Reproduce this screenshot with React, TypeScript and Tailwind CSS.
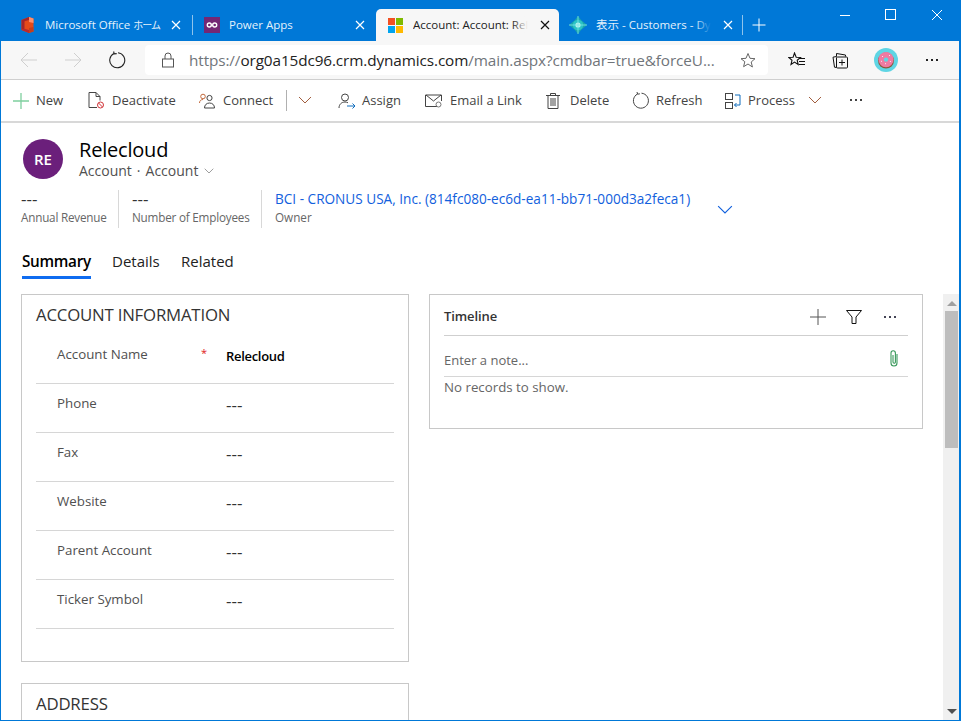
import React from "react";

const FONT = { fontFamily: '"Open Sans","Noto Sans","Noto Sans CJK JP",sans-serif' };

function X({ className = "" }: { className?: string }) {
  return (
    <svg width="10" height="10" viewBox="0 0 10 10" className={className} fill="none" stroke="currentColor" strokeWidth="1.2">
      <path d="M1 1l8 8M9 1l-8 8" />
    </svg>
  );
}

function OfficeIcon() {
  return (
    <svg width="13" height="16" viewBox="0 0 13 16">
      <path d="M.5 3L8 0l4.500 1.500v13L8 16 .5 13z" fill="#e64a19" />
      <path d="M.5 3L8 0v3L3.500 4.300v7.400L.5 13z" fill="#a4262c" />
      <path d="M.5 13l3-1.300L8 13v3z" fill="#b7282e" />
      <path d="M8 0l4.500 1.500v4.500L8 5z" fill="#ff8f6b" />
      <path d="M8 11l4.500-1v4.500L8 16z" fill="#c43e1c" />
    </svg>
  );
}

function PowerAppsIcon() {
  return (
    <svg width="16" height="16" viewBox="0 0 16 16">
      <rect width="16" height="16" fill="#742774" />
      <circle cx="5.300" cy="8" r="2" fill="none" stroke="#fff" strokeWidth="1.400" />
      <circle cx="10.700" cy="8" r="2" fill="none" stroke="#fff" strokeWidth="1.400" />
    </svg>
  );
}

function MsLogo() {
  return (
    <svg width="15" height="15" viewBox="0 0 15 15">
      <rect width="7" height="7" fill="#f25022" />
      <rect x="8" width="7" height="7" fill="#7fba00" />
      <rect y="8" width="7" height="7" fill="#00a4ef" />
      <rect x="8" y="8" width="7" height="7" fill="#ffb900" />
    </svg>
  );
}

function DynIcon() {
  return (
    <svg width="18" height="18" viewBox="0 0 18 18" className="shrink-0">
      <path d="M9 0l3 4 6 5-6 5-3 4-3-4-6-5 6-5z" fill="#1aa5ad" />
      <circle cx="9" cy="9" r="5.200" fill="#2bc3c6" />
      <circle cx="9" cy="9" r="2.600" fill="#b5f3f0" />
      <path d="M0 9h18M9 0v18" stroke="#7fe6e6" strokeWidth=".8" />
    </svg>
  );
}

function Tab({ icon, label, active, width, fade, pad = "pl-[11px] pr-[9px]", gap = "ml-[10px]" }: { icon: React.ReactNode; label: React.ReactNode; active?: boolean; width: string; fade?: boolean; pad?: string; gap?: string }) {
  return (
    <div className={`flex items-center h-8 shrink-0 ${pad} ${width} ${active ? "bg-[#f7f7f7] rounded-t-[5px] text-[#222]" : "text-[#e4f1fb]"}`}>
      <div className="w-[16px] h-[17px] flex items-center justify-center shrink-0">{icon}</div>
      <div className={`flex-1 min-w-0 ${gap} overflow-hidden whitespace-nowrap text-[11.500px] relative`}>
        {label}
        {fade && <span className={`absolute right-0 top-0 bottom-0 w-4 bg-gradient-to-r from-transparent ${active ? "to-[#f7f7f7]" : "to-[#0078d7]"}`} />}
      </div>
      <X className={`shrink-0 ${fade ? "ml-[12px]" : "ml-1"} ${active ? "text-[#111]" : "text-white"}`} />
    </div>
  );
}

function Cmd({ icon, label, width, gap = "ml-[6px]" }: { icon: React.ReactNode; label?: string; width: string; gap?: string }) {
  return (
    <div className={`flex items-center shrink-0 ${width}`}>
      {icon}
      {label && <span className={`${gap} text-[13px] text-[#444] whitespace-nowrap pt-px`}>{label}</span>}
    </div>
  );
}

const stroke = { fill: "none", stroke: "#444", strokeWidth: 1 };

function Chevron({ size = 14, color = "#777" }: { size?: number; color?: string }) {
  return (
    <svg width={size} height={size * 0.6} viewBox="0 0 14 8.400" fill="none" stroke={color} strokeWidth="1">
      <path d="M1 1l6 6 6-6" />
    </svg>
  );
}

function Row({ label, value, required, bold }: { label: string; value: string; required?: boolean; bold?: boolean }) {
  return (
    <div className="h-[49px] border-b border-[#d6d6d6] flex pl-[21px] shrink-0">
      <div className="w-[144px] pt-[10px] text-[13.300px] leading-[18px] text-[#505050] shrink-0">{label}</div>
      <div className="w-[25px] pt-[10px] text-[11px] text-[#e02020] shrink-0 leading-[16px]">{required ? "*" : ""}</div>
      <div className={`pt-[12px] leading-[18px] ${bold ? "text-[13px] font-semibold text-black tracking-[-0.3px]" : "text-[17px] text-[#333]"}`}>{value}</div>
    </div>
  );
}

function Donut() {
  return (
    <svg width="24" height="24" viewBox="0 0 24 24">
      <circle cx="12" cy="12" r="12" fill="#5fd5e4" />
      <circle cx="12" cy="12.600" r="8" fill="#8a5a3c" />
      <circle cx="12" cy="11.600" r="7.600" fill="#ef7aa2" />
      <circle cx="12" cy="11.600" r="2.200" fill="#5fd5e4" />
      <path d="M8 8l1 1M15 7l1 1M7 13l1 .6M16 13l.8 1M11 15.500l1 .4" stroke="#fff" strokeWidth=".8" />
    </svg>
  );
}

function Dots({ color }: { color: string }) {
  return (
    <div className="flex gap-[3px]">
      <span className={`w-[2px] h-[2px] ${color}`} />
      <span className={`w-[2px] h-[2px] ${color}`} />
      <span className={`w-[2px] h-[2px] ${color}`} />
    </div>
  );
}

export default function App() {
  return (
    <div style={FONT} className="w-[961px] h-[721px] overflow-hidden bg-white flex flex-col border-l border-r-2 border-b border-[#0078d7]">
      {/* Title bar */}
      <div className="h-[41px] bg-[#0078d7] flex items-end shrink-0">
        <div className="flex items-center pl-[7px]">
          <Tab width="w-[184px]" pad="pl-[11px] pr-[11px]" icon={<OfficeIcon />} label={<>Microsoft Office <span className="text-[10px] tracking-[-1px]">ホーム</span></>} />
          <div className="w-px h-5 bg-[#8fc4ec]" />
          <Tab width="w-[183px]" pad="pl-[11px] pr-[11px]" gap="ml-[9px]" icon={<PowerAppsIcon />} label="Power Apps" />
          <Tab width="w-[183px]" active icon={<MsLogo />} label="Account: Account: Relecloud" fade />
          <Tab width="w-[183px]" icon={<DynIcon />} label="表示 - Customers - Dynamics" fade />
          <div className="w-px h-5 bg-[#8fc4ec]" />
          <svg width="16" height="16" viewBox="0 0 16 16" className="ml-[8px]" fill="none" stroke="#fff" strokeWidth="1">
            <path d="M8 1.500v13M1.500 8h13" />
          </svg>
        </div>
        <div className="flex-1 self-start flex justify-end pt-[9px] pr-[16px] gap-[34px] items-start">
          <svg width="12" height="12" viewBox="0 0 12 12" fill="none" stroke="#fff" strokeWidth="1"><path d="M1 6.500h10" /></svg>
          <svg width="12" height="12" viewBox="0 0 12 12" fill="none" stroke="#fff" strokeWidth="1"><rect x=".5" y=".5" width="10" height="10" /></svg>
          <svg width="12" height="12" viewBox="0 0 12 12" fill="none" stroke="#fff" strokeWidth="1"><path d="M1 1l10 10M11 1L1 11" /></svg>
        </div>
      </div>

      {/* Browser toolbar */}
      <div className="h-[39px] bg-[#f7f7f7] border-b border-[#cfcfcf] flex items-center shrink-0">
        <div className="flex items-center pl-[19px] w-[144px] shrink-0">
          <svg width="18" height="16" viewBox="0 0 18 16" fill="none" stroke="#cfcfcf" strokeWidth="1"><path d="M17 8H1M8 1L1 8l7 7" /></svg>
          <svg width="18" height="16" viewBox="0 0 18 16" fill="none" stroke="#cfcfcf" strokeWidth="1" className="ml-[26px]"><path d="M1 8h16M10 1l7 7-7 7" /></svg>
          <svg width="18" height="18" viewBox="0 0 18 18" fill="none" stroke="#222" strokeWidth="1.100" className="ml-[26px]"><path d="M6 2.500a7.500 7.500 0 1 0 4-.7M5.600 .5l.6 2.400 2.500-.3" /></svg>
        </div>
        <div className="w-[623px] h-[30px] bg-white rounded-[4px] flex items-center shrink-0 pl-[16px] pr-[11px]">
          <svg width="14" height="16" viewBox="0 0 14 16" fill="none" stroke="#555" strokeWidth="1"><rect x="1.500" y="7" width="11" height="8" /><path d="M4 7V4a3 3 0 0 1 6 0v3" /></svg>
          <div className="ml-[14px] flex-1 min-w-0 whitespace-nowrap overflow-hidden text-[15.300px] tracking-[-0.1px] text-[#70757a]">
            https://<span className="text-[#222]">org0a15dc96.crm.dynamics.com</span>/main.aspx?cmdbar=true&amp;forceU...
          </div>
          <svg width="17" height="17" viewBox="0 0 17 17" fill="none" stroke="#666" strokeWidth="1" className="ml-[8px] shrink-0"><path d="M8 1.500l2 4.800 5 .4-3.800 3.300 1.200 5L8 12l-4.400 2.700 1.200-5L1 6.700l5-.4z" /></svg>
        </div>
        <div className="flex items-center pl-[20px] flex-1">
          <svg width="18" height="16" viewBox="0 0 18 16" fill="none" stroke="#111" strokeWidth="1.100"><path d="M6.500 1l1.700 4.200 4.300.3-3.300 2.800 1 4.200-3.700-2.400L3 12.500l1-4.200L.8 5.500l4.300-.3zM11 6.500h6M11 9.500h6M11 12.500h6" /></svg>
          <svg width="17" height="17" viewBox="0 0 17 17" fill="none" stroke="#111" strokeWidth="1" className="ml-[26px]"><path d="M4.500 4.500V1.500l9 1.500v1.500M4.500 15.500l-2-.3-1.500-10 3.500-.7" /><rect x="4.500" y="5" width="11" height="11" rx="1" /><path d="M10 7.500v6M7 10.500h6" /></svg>
          <div className="ml-[25px]"><Donut /></div>
          <div className="ml-[28px]"><Dots color="bg-[#222]" /></div>
        </div>
      </div>

      {/* Command bar */}
      <div className="h-[43px] border-b-2 border-[#d8d8d8] flex items-center pl-[12px] shrink-0">
        <Cmd width="w-[75px]" gap="ml-[7px]" label="New" icon={<svg width="16" height="16" viewBox="0 0 16 16" fill="none" stroke="#7fcf9f" strokeWidth="1.300"><path d="M8 0v16M0 8h16" /></svg>} />
        <Cmd width="w-[111px]" gap="ml-[7px]" label="Deactivate" icon={
          <svg width="17" height="17" viewBox="0 0 17 17" fill="none"><path d="M9 15.500H1V.5h7l4 4v4" {...stroke} /><path d="M8 .5v4h4" {...stroke} /><circle cx="12.500" cy="13" r="3" stroke="#d13438" /><path d="M10.500 11l4 4" stroke="#d13438" /></svg>} />
        <Cmd width="w-[87px]" gap="ml-[8px]" label="Connect" icon={
          <svg width="16" height="16" viewBox="0 0 16 16" fill="none"><circle cx="4" cy="3.500" r="2.300" stroke="#c26a3d" /><circle cx="10.500" cy="5" r="2.600" stroke="#444" /><path d="M5.500 15c0-3 2-5 5-5s5 2 5 5z" stroke="#444" /><path d="M.5 10c0-2 1.300-3.500 3.500-3.500" stroke="#c26a3d" /></svg>} />
        <div className="w-px h-[21px] bg-[#b0b0b0] shrink-0" />
        <div className="w-[51px] shrink-0 flex pl-[11px]"><Chevron color="#a05a3a" /></div>
        <Cmd width="w-[87px]" gap="ml-[6px]" label="Assign" icon={
          <svg width="18" height="16" viewBox="0 0 18 16" fill="none"><circle cx="7" cy="4.500" r="3.500" stroke="#444" /><path d="M1 15c0-3.500 2.500-6 6-6 1 0 2 .2 3 .8" stroke="#444" /><path d="M9 13h8M14.500 10.500L17 13l-2.500 2.500" stroke="#0f6cbd" /></svg>} />
        <Cmd width="w-[121px]" gap="ml-[7px]" label="Email a Link" icon={
          <svg width="18" height="14" viewBox="0 0 18 14" fill="none"><path d="M12 12.500H.5V1h16v6" stroke="#444" /><path d="M1 1l7.500 6L16 1" stroke="#444" /><circle cx="13.500" cy="10.500" r="2.500" stroke="#777" /></svg>} />
        <Cmd width="w-[86px]" gap="ml-[10px]" label="Delete" icon={
          <svg width="14" height="16" viewBox="0 0 14 16" fill="none" stroke="#444"><path d="M0 2.500h14M4.500 2.500V.5h5v2M2 2.500v13h10v-13M5 5v8M7 5v8M9 5v8" /></svg>} />
        <Cmd width="w-[93px]" gap="ml-[7px]" label="Refresh" icon={
          <svg width="17" height="17" viewBox="0 0 17 17" fill="none" stroke="#444"><path d="M5.500 2a7.500 7.500 0 1 0 4-.8M5 0l.6 2.200 2.300-.4" /></svg>} />
        <Cmd width="w-[83px]" gap="ml-[7px]" label="Process" icon={
          <svg width="16" height="16" viewBox="0 0 16 16" fill="none"><rect x=".5" y=".5" width="7" height="6" stroke="#444" /><rect x=".5" y="9.500" width="7" height="6" stroke="#444" /><path d="M10 2h5v10H9.500M11.500 10L9.500 12l2 2" stroke="#0f6cbd" /></svg>} />
        <div className="w-[42px] shrink-0"><Chevron color="#a05a3a" /></div>
        <div className="pb-[2px]"><Dots color="bg-[#444]" /></div>
      </div>

      {/* Body */}
      <div className="flex-1 min-h-0 flex">
        <div className="w-[942px] shrink-0 pl-[20px] overflow-hidden">
          {/* Record header */}
          <div className="flex pt-[15px] h-[67px]">
            <div className="w-[40px] h-[40px] ml-[2px] rounded-full bg-[#6b1f7b] text-white font-semibold text-[15px] flex items-center justify-center shrink-0 mt-px">RE</div>
            <div className="ml-[16px]">
              <div className="text-[20px] h-[24px] leading-[24px] text-black tracking-[-0.2px]">Relecloud</div>
              <div className="flex items-center text-[14px] h-[18px] leading-[18px] text-[#505050]">
                <span>Account</span><span className="mx-[5px]">·</span><span>Account</span>
                <span className="ml-[6px]"><Chevron size={10} /></span>
              </div>
            </div>
          </div>

          <div className="flex items-start h-[39px]">
            <div className="w-[98px] h-[38px] border-r border-[#d8d8d8]">
              <div className="text-[17px] leading-[18px] text-[#333]">---</div>
              <div className="text-[11.700px] leading-[18px] text-[#666] whitespace-nowrap tracking-[-0.2px]">Annual Revenue</div>
            </div>
            <div className="w-[143px] h-[38px] border-r border-[#d8d8d8] pl-[13px]">
              <div className="text-[17px] leading-[18px] text-[#333]">---</div>
              <div className="text-[11.700px] leading-[18px] text-[#666] whitespace-nowrap tracking-[-0.2px]">Number of Employees</div>
            </div>
            <div className="pl-[13px] w-[455px]">
              <div className="text-[13.600px] leading-[18px] text-[#1160dd] whitespace-nowrap">BCI - CRONUS USA, Inc. (814fc080-ec6d-ea11-bb71-000d3a2feca1)</div>
              <div className="text-[11.700px] leading-[18px] text-[#666]">Owner</div>
            </div>
            <div className="pt-[15px]"><Chevron size={16} color="#1160dd" /></div>
          </div>

          <div className="flex h-[65px] pt-[22px] pl-px text-[15px] leading-[20px] text-[#222]">
            <div className="w-[90px]">
              <div className="w-[69px] h-[28px] border-b-[3px] border-[#0f6cf0] font-semibold text-[15.300px] text-black whitespace-nowrap tracking-[-0.3px]">Summary</div>
            </div>
            <div className="w-[69px]">Details</div>
            <div>Related</div>
          </div>

          <div className="flex items-start">
            <div className="w-[388px] shrink-0">
              <div className="h-[368px] border border-[#c8c8c8] pl-[14px] pr-[14px] flex flex-col">
                <div className="h-[40px] pt-[8px] text-[16.800px] leading-[24px] text-[#333] tracking-[-0.2px]">ACCOUNT INFORMATION</div>
                <Row label="Account Name" value="Relecloud" required bold />
                <Row label="Phone" value="---" />
                <Row label="Fax" value="---" />
                <Row label="Website" value="---" />
                <Row label="Parent Account" value="---" />
                <Row label="Ticker Symbol" value="---" />
              </div>
              <div className="mt-[21px] h-[60px] border border-[#c8c8c8] pl-[14px] pt-[8px] text-[16.800px] leading-[24px] text-[#333] tracking-[-0.2px]">ADDRESS</div>
            </div>
            <div className="ml-[20px] w-[494px] h-[135px] border border-[#c8c8c8] px-[14px] shrink-0">
              <div className="h-[41px] pt-[4px] border-b border-[#cfcfcf] flex items-center">
                <div className="flex-1 text-[13px] font-semibold text-[#333] tracking-[-0.1px]">Timeline</div>
                <svg width="16" height="16" viewBox="0 0 16 16" fill="none" stroke="#555" strokeWidth="1"><path d="M8 0v16M0 8h16" /></svg>
                <svg width="16" height="16" viewBox="0 0 16 16" fill="none" stroke="#111" strokeWidth="1" className="ml-[20px]"><path d="M.5 1.500h15L10 8v6.500H6V8z" /></svg>
                <div className="ml-[22px] mr-[12px]"><Dots color="bg-[#445]" /></div>
              </div>
              <div className="h-[41px] border-b border-[#d6d6d6] flex items-center">
                <div className="flex-1 text-[13px] text-[#666] pt-[10px]">Enter a note...</div>
                <svg width="10" height="17" viewBox="0 0 10 17" fill="none" stroke="#3a9a5c" strokeWidth="1.100" className="mr-[9px] mt-[4px]"><path d="M8 4v9a3 3 0 0 1-6 0V3a2.200 2.200 0 0 1 4.400 0v9a1.200 1.200 0 0 1-2.400 0V5" /></svg>
              </div>
              <div className="text-[13.300px] leading-[20px] text-[#666]">No records to show.</div>
            </div>
          </div>
        </div>

        {/* Scrollbar */}
        <div className="w-[16px] shrink-0 mt-[171px] bg-[#f0f0f0] flex flex-col pl-[2px] pr-px">
          <div className="h-[17px] flex items-center justify-center shrink-0 pt-[1px]">
            <span className="w-0 h-0 border-x-[5px] border-x-transparent border-b-[5px] border-b-[#a0a0a0]" />
          </div>
          <div className="h-[137px] bg-[#bdbdbd] shrink-0" />
          <div className="flex-1" />
          <div className="h-[17px] flex items-center justify-center shrink-0">
            <span className="w-0 h-0 border-x-[5px] border-x-transparent border-t-[5px] border-t-[#505050]" />
          </div>
        </div>
      </div>
    </div>
  );
}
